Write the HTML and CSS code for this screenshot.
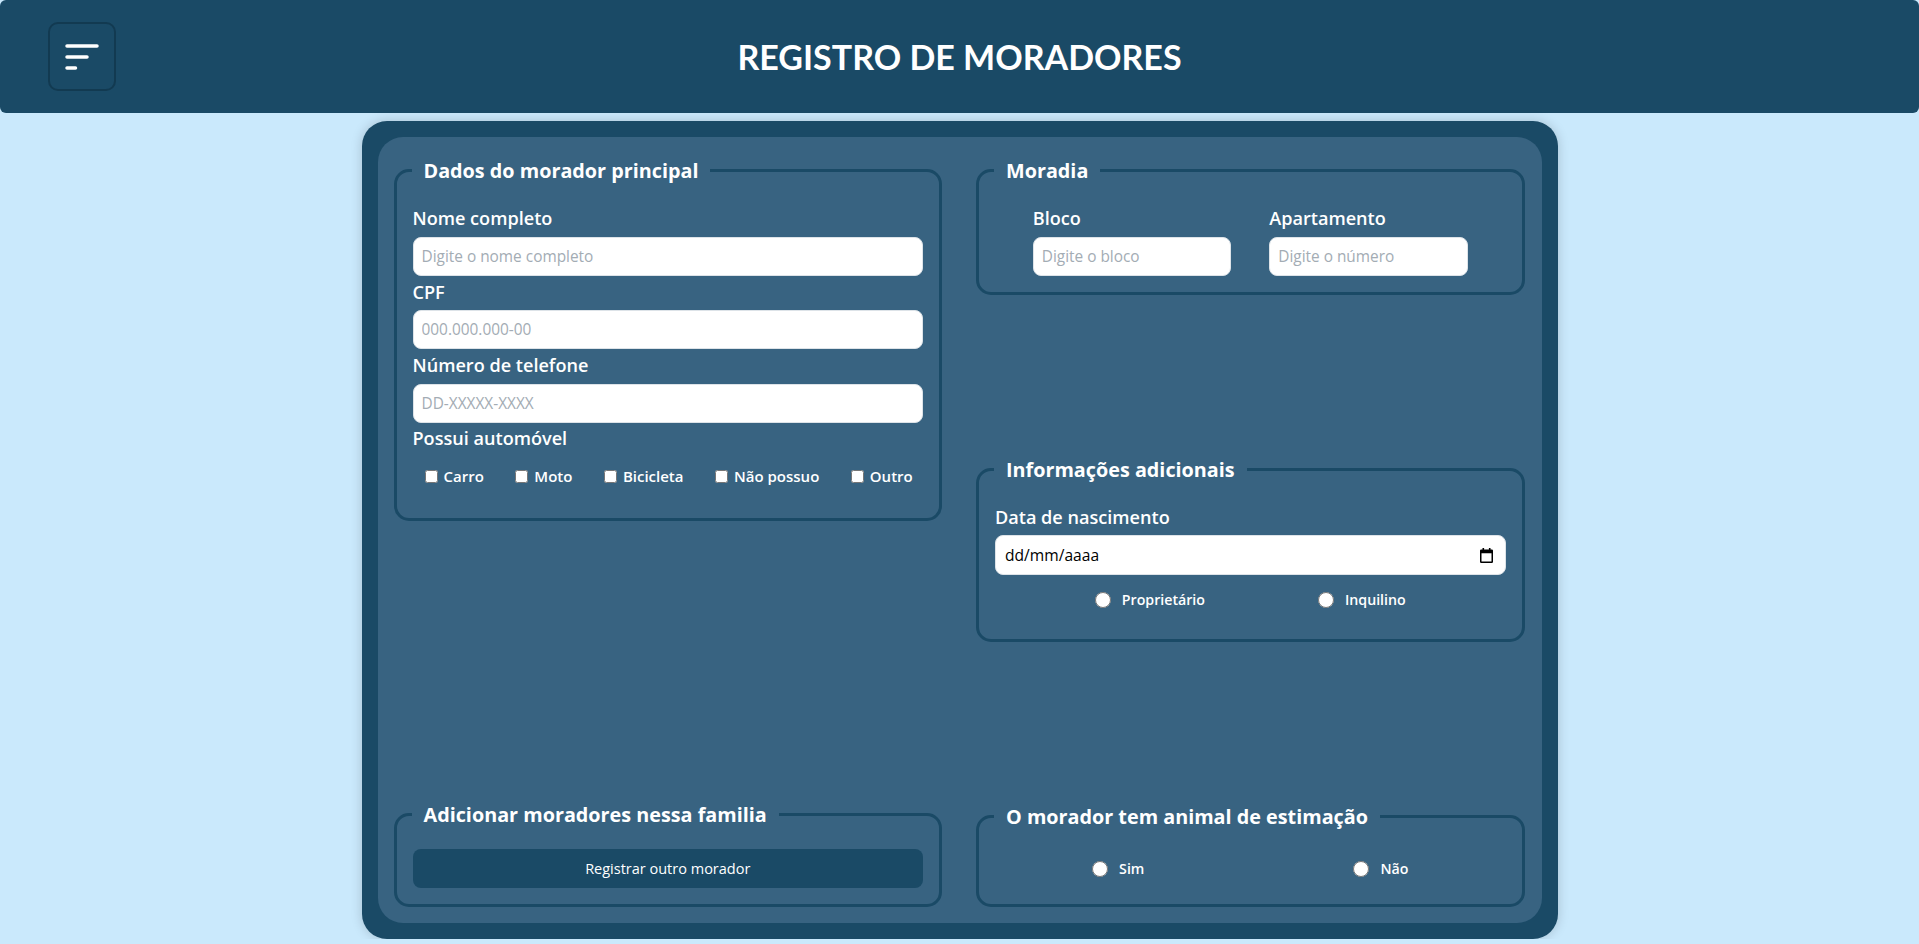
FILE: index.html
```html
<!DOCTYPE html>
<html lang="pt-BR">
<head>
<meta charset="utf-8">
<title>Registro de Moradores</title>
<link rel="stylesheet" href="styles.css">
</head>
<body>
<header class="topbar">
  <button class="menu-btn" type="button" aria-label="Menu">
    <svg width="34" height="26" viewBox="0 0 34 26" aria-hidden="true">
      <path d="M2 2H32M2 13H22M2 24H10.5" stroke="#fff" stroke-width="3.5" stroke-linecap="round" fill="none"/>
    </svg>
  </button>
  <h1 class="title">REGISTRO DE MORADORES</h1>
  <div class="spacer"></div>
</header>

<main class="card">
  <form class="panel">
    <div class="col">
      <fieldset class="box">
        <legend>Dados do morador principal</legend>
        <label class="lbl" for="nome">Nome completo</label>
        <input class="field" id="nome" type="text" placeholder="Digite o nome completo">
        <label class="lbl" for="cpf">CPF</label>
        <input class="field" id="cpf" type="text" placeholder="000.000.000-00">
        <label class="lbl" for="tel">Número de telefone</label>
        <input class="field" id="tel" type="text" placeholder="DD-XXXXX-XXXX">
        <span class="lbl lbl-tight">Possui automóvel</span>
        <div class="checks">
          <label class="opt"><input type="checkbox">Carro</label>
          <label class="opt"><input type="checkbox">Moto</label>
          <label class="opt"><input type="checkbox">Bicicleta</label>
          <label class="opt"><input type="checkbox">Não possuo</label>
          <label class="opt"><input type="checkbox">Outro</label>
        </div>
      </fieldset>

      <fieldset class="box">
        <legend>Adicionar moradores nessa familia</legend>
        <button type="button" class="btn">Registrar outro morador</button>
      </fieldset>
    </div>

    <div class="col">
      <fieldset class="box">
        <legend>Moradia</legend>
        <div class="duo">
          <div class="unit">
            <label class="lbl" for="bloco">Bloco</label>
            <input class="field" id="bloco" type="text" placeholder="Digite o bloco">
          </div>
          <div class="unit">
            <label class="lbl" for="apto">Apartamento</label>
            <input class="field" id="apto" type="text" placeholder="Digite o número">
          </div>
        </div>
      </fieldset>

      <fieldset class="box">
        <legend>Informações adicionais</legend>
        <span class="lbl">Data de nascimento</span>
        <div class="field date">
          <span>dd/mm/aaaa</span>
          <svg width="13" height="15" viewBox="0 0 13 15" aria-hidden="true">
            <rect x="0.75" y="2.25" width="11.5" height="12" rx="0.5" fill="none" stroke="#000" stroke-width="1.5"/>
            <rect x="0.75" y="2.25" width="11.5" height="3" fill="#000"/>
            <rect x="2.5" y="0" width="1.6" height="3" fill="#000"/>
            <rect x="8.9" y="0" width="1.6" height="3" fill="#000"/>
          </svg>
        </div>
        <div class="radios radios-info">
          <label class="opt opt-radio"><input type="radio" name="tipo">Proprietário</label>
          <label class="opt opt-radio"><input type="radio" name="tipo">Inquilino</label>
        </div>
      </fieldset>

      <fieldset class="box">
        <legend>O morador tem animal de estimação</legend>
        <div class="radios radios-pet">
          <label class="opt opt-radio"><input type="radio" name="pet">Sim</label>
          <label class="opt opt-radio"><input type="radio" name="pet">Não</label>
        </div>
      </fieldset>
    </div>
  </form>
</main>
</body>
</html>
```

FILE: styles.css
```css
* {
  box-sizing: border-box;
}

body {
  margin: 0;
  background: #cae9fc;
  font-family: "Open Sans", "Noto Sans", sans-serif;
}

.topbar {
  height: 113px;
  background: #1a4a66;
  border-radius: 6px;
  display: grid;
  grid-template-columns: 1fr auto 1fr;
  align-items: center;
  padding: 0 48px;
}

.menu-btn {
  justify-self: start;
  width: 68px;
  height: 69px;
  background: transparent;
  border: 2px solid #123a51;
  border-radius: 10px;
  display: flex;
  align-items: center;
  justify-content: center;
  padding: 0;
}

.menu-btn svg {
  display: block;
}

.title {
  margin: 0;
  color: #fff;
  font-family: "Lato", sans-serif;
  font-weight: 700;
  font-size: 34px;
  line-height: 1;
}

.card {
  width: 1196px;
  height: 818px;
  margin: 8px auto 0;
  padding: 16px;
  background: #1a4a66;
  border-radius: 25px;
  box-shadow: 0 0 12px rgba(0, 0, 0, 0.18);
}

.panel {
  height: 100%;
  margin: 0;
  background: #386381;
  border-radius: 25px;
  padding: 20px 17px 16px 16px;
  display: grid;
  grid-template-columns: 1fr 1fr;
  column-gap: 34px;
}

.col {
  display: flex;
  flex-direction: column;
  justify-content: space-between;
  min-width: 0;
}

.box {
  margin: 0;
  min-width: 0;
  border: 3px solid #1a4a66;
  border-radius: 15px;
  padding: 18px 16px 16px;
}

.box legend {
  margin-left: -1px;
  padding: 0 12px;
  color: #fff;
  font-weight: 700;
  font-size: 19.8px;
  line-height: 27px;
}

.lbl {
  display: block;
  margin: 4px 0 6px;
  color: #fff;
  font-weight: 600;
  font-size: 18.1px;
  line-height: 24.5px;
}

.lbl-tight {
  margin-top: 3px;
}

.field {
  display: block;
  width: 100%;
  height: 39px;
  margin: 0;
  padding: 0 8px;
  background: #fff;
  border: 1px solid #dde3e8;
  border-radius: 8px;
  font-family: inherit;
  font-size: 15.4px;
  color: #222;
}

.field::placeholder {
  color: #a3acb4;
}

.date {
  height: 40px;
  display: flex;
  align-items: center;
  justify-content: space-between;
  padding: 0 12px 0 9px;
  color: #000;
  font-size: 15.6px;
}

.date svg {
  display: block;
}

.checks {
  display: flex;
  gap: 31.5px;
  padding-left: 12px;
  margin: 16px 0 16px;
}

.opt {
  display: flex;
  align-items: center;
  gap: 6px;
  color: #fff;
  font-weight: 600;
  font-size: 15px;
  line-height: 20px;
}

.opt input[type="checkbox"] {
  margin: 0;
  width: 13px;
  height: 13px;
}

.opt-radio {
  gap: 11px;
  font-size: 14.2px;
}

.opt input[type="radio"] {
  margin: 0;
  width: 16px;
  height: 16px;
}

.radios {
  display: flex;
  justify-content: center;
}

.radios-info {
  gap: 113px;
  margin: 15px 0 13px;
}

.radios-pet {
  gap: 209px;
  margin: 11px 0 9px;
}

.duo {
  display: flex;
  justify-content: center;
  gap: 38px;
}

.unit {
  width: 198.5px;
}

.btn {
  display: block;
  width: 100%;
  height: 39px;
  margin-top: 3px;
  background: #1a4a66;
  color: #fff;
  border: none;
  border-radius: 8px;
  font-family: inherit;
  font-weight: 500;
  font-size: 14.5px;
}
```
